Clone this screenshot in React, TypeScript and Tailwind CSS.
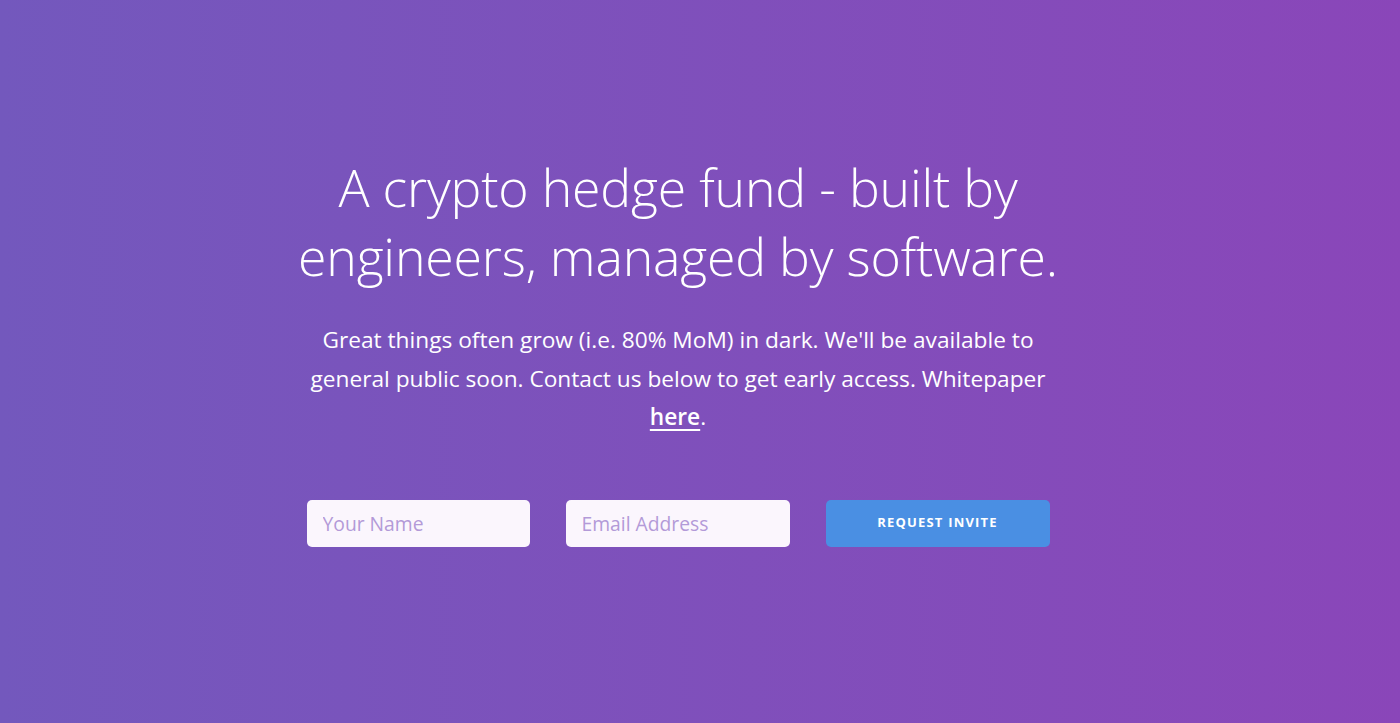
import React from "react";

export default function App() {
  return (
    <div
      className="w-full h-[723px] overflow-hidden bg-gradient-to-r from-[#7358BD] to-[#8A46B9] flex flex-col items-center pr-[44px] pt-[153px]"
      style={{ fontFamily: '"Open Sans", "Noto Sans", sans-serif' }}
    >
      <h1 className="text-white font-light text-[51.8px] leading-[69px] text-center w-[800px] tracking-[-0.2px]">
        A crypto hedge fund - built by
        <br />
        engineers, managed by software.
      </h1>
      <p className="mt-[30px] text-white text-[22.7px] leading-[38.5px] text-center w-[756px]">
        Great things often grow (i.e. 80% MoM) in dark. We'll be available to general public soon. Contact us below to get early access. Whitepaper{" "}
        <a href="#" className="font-semibold underline underline-offset-[4px] decoration-[2px]">here</a>.
      </p>
      <form className="mt-[63px] flex gap-[36px]" onSubmit={(e) => e.preventDefault()}>
        <input
          type="text"
          placeholder="Your Name"
          className="w-[223px] h-[47px] rounded-[5px] bg-[#FBF6FD] px-[16px] text-[19.3px] text-[#5b3d99] placeholder:text-[#B39AD8] outline-none"
        />
        <input
          type="email"
          placeholder="Email Address"
          className="w-[224px] h-[47px] rounded-[5px] bg-[#FBF6FD] px-[16px] text-[19.3px] text-[#5b3d99] placeholder:text-[#B39AD8] outline-none"
        />
        <button
          type="submit"
          className="w-[224px] h-[47px] rounded-[5px] bg-[#4A8FE3] text-white font-bold text-[13px] tracking-[1.2px] uppercase"
        >
          Request Invite
        </button>
      </form>
    </div>
  );
}
